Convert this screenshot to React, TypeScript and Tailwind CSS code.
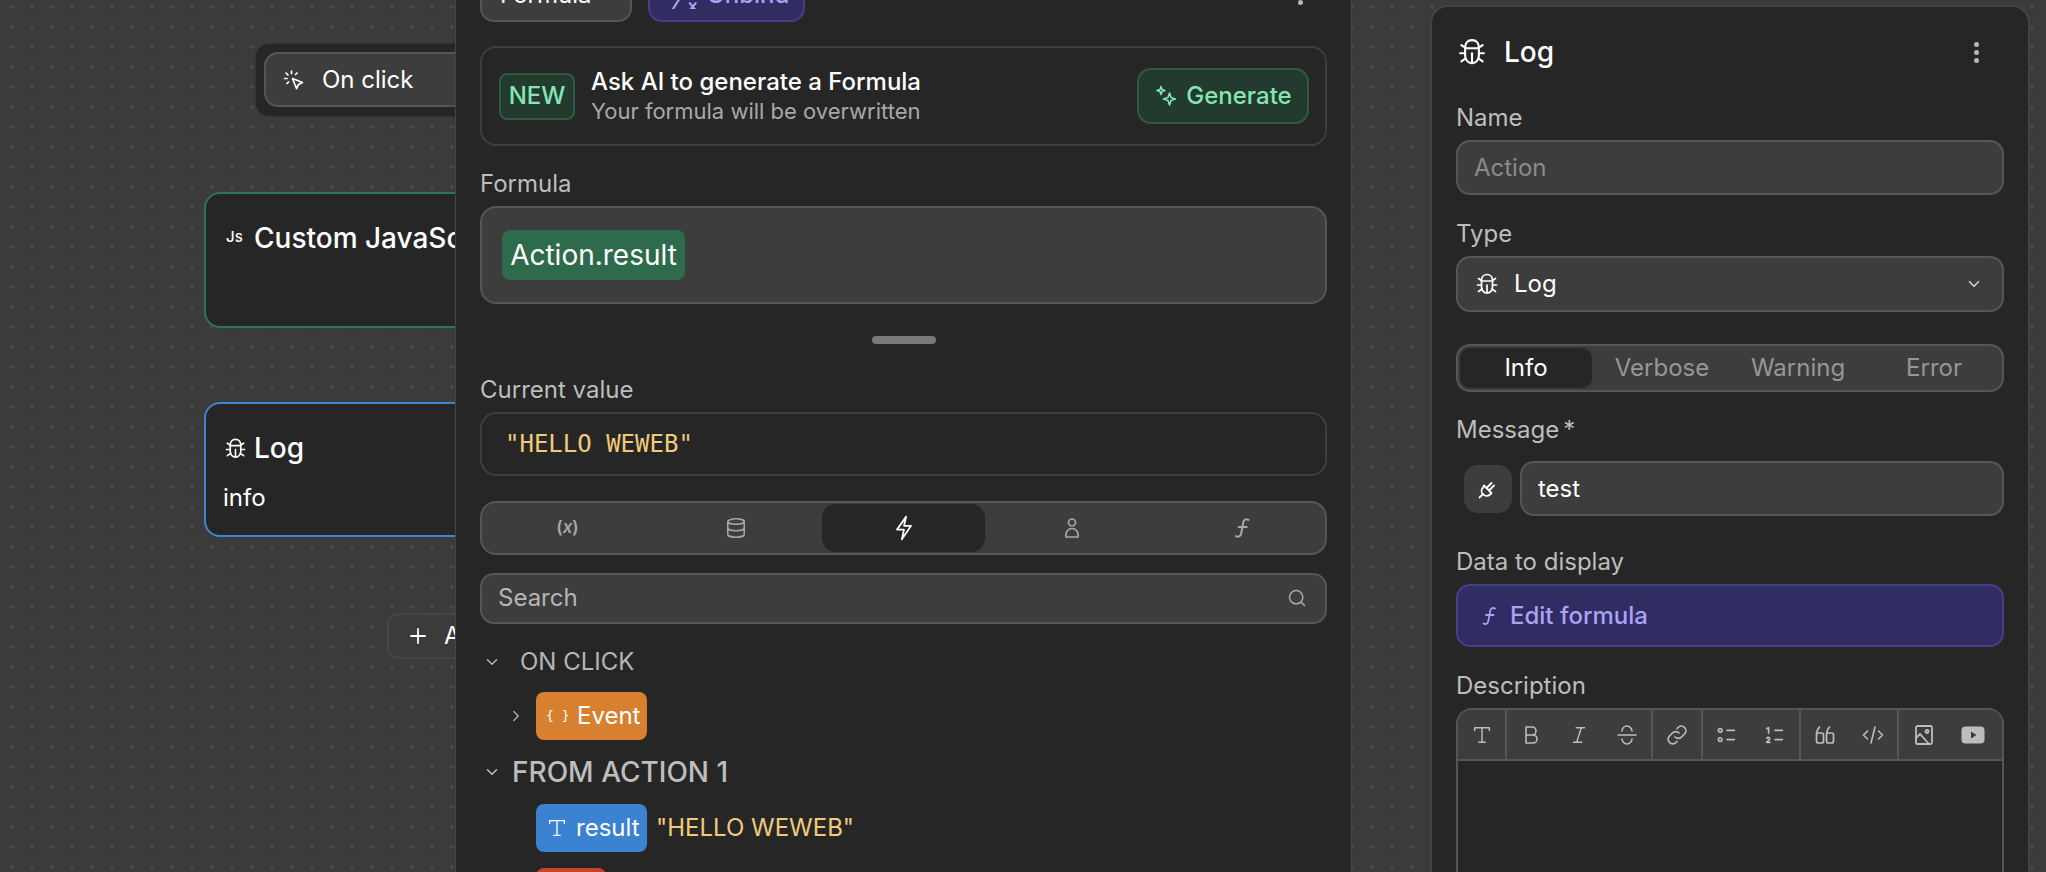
import { ChevronDown, ChevronRight, Database, Plus, Search } from "lucide-react";
import type { ReactNode } from "react";

const Icon = ({ className, children, sw = 1.8 }: { className: string; children: ReactNode; sw?: number }) => (
  <svg viewBox="0 0 24 24" fill="none" stroke="currentColor" strokeWidth={sw} strokeLinecap="round" strokeLinejoin="round" className={className}>
    {children}
  </svg>
);

const BugIcon = ({ className }: { className: string }) => (
  <Icon className={className} sw={1.7}>
    <path d="M12 2.500c-3.500 0-5.500 2.500-5.500 6v6.500c0 3.500 2.500 6 5.500 6s5.500-2.500 5.500-6V8.500c0-3.500-2-6-5.500-6z" />
    <path d="M6.500 9h11" />
    <path d="M12 13v8" />
    <path d="M6.500 13H2.500M6.500 8.500 3.500 6.500M7 17l-3.500 2.500" />
    <path d="M17.500 13h4M17.500 8.500l3-2M17 17l3.500 2.500" />
  </Icon>
);

const FormulaIcon = ({ className }: { className: string }) => (
  <Icon className={className}>
    <path d="M17 4.500c-2.200-1.200-4.300-.2-4.800 2.400l-1.900 10.200c-.5 2.600-2.600 3.600-4.800 2.400" />
    <path d="M8 11h7.500" />
  </Icon>
);

const SparkIcon = ({ className }: { className: string }) => (
  <Icon className={className} sw={1.6}>
    <path d="M7 2.500l1 3 3 1-3 1-1 3-1-3-3-1 3-1z" />
    <path d="M15.500 9l1.500 4.500 4.500 1.500-4.500 1.500-1.500 4.500-1.500-4.500-4.500-1.500 4.500-1.500z" />
  </Icon>
);

const Kebab = () => (
  <div className="flex flex-col gap-[3px]">
    <span className="h-[5px] w-[5px] rounded-full bg-[#b5b5b5]" />
    <span className="h-[5px] w-[5px] rounded-full bg-[#b5b5b5]" />
    <span className="h-[5px] w-[5px] rounded-full bg-[#b5b5b5]" />
  </div>
);

const Label = ({ children, className = "" }: { children: ReactNode; className?: string }) => (
  <div className={`h-[28px] text-[24px] leading-[28px] text-[#bdbdbd] ${className}`}>{children}</div>
);

const Chip = ({ className, children }: { className: string; children: ReactNode }) => (
  <div className={`flex h-[48px] items-center rounded-[8px] text-[24px] text-white ${className}`}>{children}</div>
);

const ToolButton = ({ children }: { children: ReactNode }) => (
  <div className="flex h-full flex-1 items-center justify-center text-[#bdbdbd]">{children}</div>
);

const Canvas = () => (
  <div className="relative w-[455px] shrink-0">
    <div className="absolute left-[255px] top-[43px] h-[74px] w-[300px] rounded-[14px] border border-[#333333] bg-[#262626] pl-[8px] pt-[8px]">
      <div className="flex h-[55px] items-center rounded-[14px] border-2 border-[#565656] bg-[#3d3d3d] pl-[16px] text-[24px] text-white">
        <Icon className="h-[24px] w-[24px]" sw={1.7}>
          <path d="M10.500 10.500 20.500 14.500 16.500 16.500 14.500 20.500z" />
          <path d="M9.500 3v2.500M4 5l2 2M15 5l-1.500 1.500M2.500 10.500H5M5 15.500l1.500-1.500" />
        </Icon>
        <span className="ml-[16px]">On click</span>
      </div>
    </div>
    <div className="absolute left-[204px] top-[192px] h-[136px] w-[400px] rounded-[16px] border-2 border-[#2f7552] bg-[#262626] pl-[20px] pt-[26px] text-white">
      <div className="flex h-[36px] items-center">
        <span className="mb-[2px] w-[28px] text-[15px] font-medium">Js</span>
        <span className="whitespace-nowrap text-[28px] font-medium">Custom JavaScript</span>
      </div>
    </div>
    <div className="absolute left-[204px] top-[402px] h-[135px] w-[400px] rounded-[16px] border-2 border-[#3c84d4] bg-[#262626] pl-[18px] pt-[26px] text-white">
      <div className="flex h-[36px] items-center">
        <BugIcon className="h-[23px] w-[23px]" />
        <span className="ml-[7px] text-[28px] font-medium">Log</span>
      </div>
      <div className="-ml-[1px] mt-[18px] text-[24px] leading-[28px]">info</div>
    </div>
    <div className="absolute left-[387px] top-[613px] flex h-[46px] w-[200px] items-center rounded-[12px] border-2 border-[#454545] bg-[#3b3b3b] pl-[17px] text-[24px] text-white">
      <Plus className="h-[24px] w-[24px]" strokeWidth={1.8} />
      <span className="ml-[14px] whitespace-nowrap">Add</span>
    </div>
  </div>
);

const FormulaPanel = () => (
  <div className="relative z-10 flex w-[897px] shrink-0 flex-col border-x border-[#454545] bg-[#262626] px-[24px] *:shrink-0">
    <div className="-mt-[33px] flex h-[55px] items-center gap-[16px]">
      <div className="flex h-full w-[152px] items-center rounded-[14px] border-2 border-[#565656] bg-[#3d3d3d] pl-[18px] text-[24px] text-white">Formula</div>
      <div className="flex h-full w-[157px] items-center gap-[9px] rounded-[14px] border-2 border-[#453f85] bg-[#312c62] pl-[20px] text-[24px] font-medium text-[#a8a3f5]">
        <Icon className="h-[28px] w-[28px]">
          <path d="M14 6 2.500 24" />
          <path d="M17 19l5 6M22 19l-5 6" />
        </Icon>
        Unbind
      </div>
      <div className="ml-auto mr-[24px]">
        <Kebab />
      </div>
    </div>

    <div className="mt-[24px] flex h-[100px] items-center rounded-[16px] border-2 border-[#3f3f3f] pl-[17px] pr-[16px]">
      <div className="flex h-[47px] w-[76px] items-center justify-center rounded-[8px] border-2 border-[#2f5a44] bg-[#233a2e] text-[24px] font-medium text-[#85e6b4]">NEW</div>
      <div className="ml-[16px]">
        <div className="text-[24px] font-medium leading-[30px] text-white">Ask AI to generate a Formula</div>
        <div className="text-[22px] leading-[29px] text-[#a8a8a8]">Your formula will be overwritten</div>
      </div>
      <div className="ml-auto flex h-[56px] w-[172px] items-center justify-center gap-[8px] rounded-[14px] border-2 border-[#2f5a44] bg-[#233a2e] text-[24px] font-medium text-[#85e6b4]">
        <SparkIcon className="h-[24px] w-[24px]" />
        Generate
      </div>
    </div>

    <Label className="mt-[23px] pt-[1px]">Formula</Label>
    <div className="mt-[9px] flex h-[98px] items-center rounded-[16px] border-2 border-[#565656] bg-[#3d3d3d] pl-[20px]">
      <div className="flex h-[50px] w-[183px] items-center justify-center rounded-[8px] bg-[#2e6b4d] text-[28px] text-white">Action.result</div>
    </div>

    <div className="mt-[32px] h-[8px] w-[64px] self-center rounded-full bg-[#7a7a7a]" />

    <Label className="mt-[31px] pt-[1px]">Current value</Label>
    <div className="mt-[9px] flex h-[64px] items-center rounded-[16px] border-2 border-[#3f3f3f] pl-[23px] font-['DejaVu_Sans_Mono',monospace] text-[24px] text-[#f1cb7a]">"HELLO WEWEB"</div>

    <div className="mt-[25px] flex h-[54px] items-center gap-[5px] rounded-[16px] border-2 border-[#565656] bg-[#3d3d3d] pl-[4px] pr-[1px] text-[#a8a8a8]">
      <div className="flex h-[48px] flex-1 items-center justify-center text-[17px] font-semibold">(<span className="italic">x</span>)</div>
      <div className="flex h-[48px] flex-1 items-center justify-center">
        <Database className="h-[22px] w-[22px]" strokeWidth={1.7} />
      </div>
      <div className="flex h-[48px] flex-1 items-center justify-center rounded-[14px] bg-[#262626] text-white">
        <Icon className="h-[26px] w-[26px]" sw={1.6}>
          <path d="M14 1.500 5.500 13.500h6.500L10 22.500l8.500-12.500H12z" />
        </Icon>
      </div>
      <div className="flex h-[48px] flex-1 items-center justify-center">
        <Icon className="h-[24px] w-[24px]" sw={1.7}>
          <circle cx="12" cy="6.500" r="3.500" />
          <path d="M6 21v-2.500a6 6 0 0 1 12 0V21z" />
        </Icon>
      </div>
      <div className="flex h-[48px] flex-1 items-center justify-center pl-[3px]">
        <FormulaIcon className="h-[26px] w-[26px]" />
      </div>
    </div>

    <div className="mt-[18px] flex h-[51px] items-center justify-between rounded-[14px] border-2 border-[#565656] bg-[#3d3d3d] pb-[2px] pl-[16px] pr-[18px] text-[24px] text-[#b5b5b5]">
      Search
      <Search className="h-[20px] w-[20px] text-[#a8a8a8]" strokeWidth={1.8} />
    </div>

    <div className="mt-[24px] flex h-[28px] items-center text-[24px] text-[#b5b5b5]">
      <ChevronDown className="ml-[3px] h-[18px] w-[18px]" />
      <span className="ml-[19px]">ON CLICK</span>
    </div>
    <div className="mt-[16px] flex items-center">
      <ChevronRight className="ml-[27px] h-[18px] w-[18px] text-[#a8a8a8]" />
      <Chip className="ml-[11px] w-[111px] bg-[#d68030] pl-[10px]">
        <span className="w-[31px] font-['DejaVu_Sans_Mono',monospace] text-[13px]">{"{ }"}</span>
        <span>Event</span>
      </Chip>
    </div>

    <div className="mt-[16px] flex h-[32px] items-center text-[28px] font-medium text-[#bdbdbd]">
      <ChevronDown className="ml-[3px] h-[18px] w-[18px]" />
      <span className="ml-[11px]">FROM ACTION 1</span>
    </div>
    <div className="ml-[56px] mt-[16px] flex items-center">
      <Chip className="w-[111px] bg-[#3b82d0] pl-[10px]">
        <Icon className="h-[22px] w-[22px]" sw={1.5}>
          <path d="M4 7V4h16v3M12 4v16M8.500 20h7" />
        </Icon>
        <span className="ml-[8px]">result</span>
      </Chip>
      <span className="ml-[9px] text-[24px] text-[#f1cb7a]">"HELLO WEWEB"</span>
    </div>
    <Chip className="ml-[56px] mt-[16px] w-[70px] bg-[#c8442a]">{null}</Chip>
  </div>
);

const LogPanel = () => (
  <div className="ml-[78px] mt-[5px] flex w-[600px] shrink-0 flex-col rounded-t-[18px] border-2 border-b-0 border-[#434343] bg-[#262626] px-[24px] pt-[27px]">
    <div className="flex h-[36px] items-center text-white">
      <BugIcon className="ml-[1px] h-[30px] w-[30px]" />
      <span className="ml-[17px] text-[28px] font-medium">Log</span>
      <div className="ml-auto mr-[25px]">
        <Kebab />
      </div>
    </div>

    <Label className="mt-[33px] pt-[1px]">Name</Label>
    <div className="mt-[9px] flex h-[55px] items-center rounded-[14px] border-2 border-[#565656] bg-[#3d3d3d] pl-[16px] text-[24px] text-[#8a8a8a]">Action</div>

    <Label className="mt-[24px] pt-[1px]">Type</Label>
    <div className="mt-[9px] flex h-[56px] items-center rounded-[14px] border-2 border-[#565656] bg-[#3d3d3d] pl-[17px] pr-[19px] text-[24px] text-white">
      <BugIcon className="h-[24px] w-[24px]" />
      <span className="ml-[15px]">Log</span>
      <ChevronDown className="ml-auto h-[18px] w-[18px] text-[#d0d0d0]" strokeWidth={2.2} />
    </div>

    <div className="mt-[32px] flex h-[48px] items-center rounded-[14px] border-2 border-[#565656] bg-[#3d3d3d] text-[24px] text-[#969696]">
      <div className="ml-[2px] flex h-[40px] w-[132px] items-center justify-center rounded-[10px] bg-[#262626] text-white">Info</div>
      <div className="flex flex-1 justify-center pl-[2px]">Verbose</div>
      <div className="flex flex-1 justify-center">Warning</div>
      <div className="flex flex-1 justify-center">Error</div>
    </div>

    <Label className="mt-[23px] pt-[1px]">
      Message<span className="ml-[4px]">*</span>
    </Label>
    <div className="mt-[18px] flex h-[55px] items-center">
      <div className="ml-[8px] flex h-[48px] w-[48px] items-center justify-center rounded-[14px] bg-[#3d3d3d] text-white">
        <Icon className="h-[24px] w-[24px]">
          <path d="M8 8.500 15.500 16l-1.500 1.500a4.950 4.950 0 0 1-7-7z" />
          <path d="M10.500 11 15.500 6M13 13.500l5-5M7 17l-3.500 3.500" />
        </Icon>
      </div>
      <div className="ml-[8px] flex h-full flex-1 items-center rounded-[14px] border-2 border-[#565656] bg-[#3d3d3d] pl-[16px] text-[24px] text-white">test</div>
    </div>

    <Label className="mt-[32px]">Data to display</Label>
    <div className="mt-[8px] flex h-[63px] items-center gap-[8px] rounded-[14px] border-2 border-[#453f85] bg-[#312c62] pl-[20px] text-[24px] font-medium text-[#a8a3f5]">
      <FormulaIcon className="h-[24px] w-[24px]" />
      Edit formula
    </div>

    <Label className="mt-[25px]">Description</Label>
    <div className="mt-[8px] flex-1 overflow-hidden rounded-t-[16px] border-2 border-b-0 border-[#565656]">
      <div className="flex h-[51px] border-b-2 border-[#565656] bg-[#3d3d3d]">
        <div className="flex w-[49px] border-r-2 border-[#565656]">
          <ToolButton>
            <Icon className="h-[22px] w-[22px]" sw={1.6}>
              <path d="M4 7V4h16v3M12 4v16M8.500 20h7" />
            </Icon>
          </ToolButton>
        </div>
        <div className="flex w-[146px] border-r-2 border-[#565656]">
          <ToolButton>
            <Icon className="h-[24px] w-[24px]" sw={1.6}>
              <path d="M7 4h6a4 4 0 0 1 0 8H7zM7 12h7a4 4 0 0 1 0 8H7z" />
            </Icon>
          </ToolButton>
          <ToolButton>
            <Icon className="h-[22px] w-[22px]" sw={1.6}>
              <path d="M9 4h9M6 20h9M14.500 4l-5 16" />
            </Icon>
          </ToolButton>
          <ToolButton>
            <Icon className="h-[24px] w-[24px]" sw={1.6}>
              <path d="M3 12h18M17 8c-.2-2.800-2.500-5-5-5S7.200 5 7 8M7 16c.2 2.800 2.500 5 5 5s4.800-2.200 5-5" />
            </Icon>
          </ToolButton>
        </div>
        <div className="flex w-[50px] border-r-2 border-[#565656]">
          <ToolButton>
            <Icon className="h-[24px] w-[24px]" sw={1.7}>
              <path d="M10 14a4.500 4.500 0 0 0 6.500 0l3-3a4.500 4.500 0 0 0-6.500-6.500L12 5.500" />
              <path d="M14 10a4.500 4.500 0 0 0-6.500 0l-3 3a4.500 4.500 0 0 0 6.500 6.500l1-1" />
            </Icon>
          </ToolButton>
        </div>
        <div className="flex w-[98px] border-r-2 border-[#565656]">
          <ToolButton>
            <Icon className="h-[22px] w-[22px]" sw={1.8}>
              <circle cx="4.500" cy="7" r="2" />
              <circle cx="4.500" cy="17" r="2" />
              <path d="M12 7h8M12 17h8" />
            </Icon>
          </ToolButton>
          <ToolButton>
            <Icon className="h-[22px] w-[22px]" sw={1.8}>
              <path d="M3 5l2-1v6" />
              <path d="M3 15.500c1-1.500 4-1 3 1l-3 3.500h3.500" />
              <path d="M12 7h8M12 17h8" />
            </Icon>
          </ToolButton>
        </div>
        <div className="flex w-[98px] border-r-2 border-[#565656]">
          <ToolButton>
            <Icon className="h-[24px] w-[24px]" sw={1.7}>
              <path d="M3.500 12a2 2 0 0 1 2-2h3a2 2 0 0 1 2 2v6a2 2 0 0 1-2 2h-3a2 2 0 0 1-2-2zc0-3 1-6 3-8" />
              <path d="M13.500 12a2 2 0 0 1 2-2h3a2 2 0 0 1 2 2v6a2 2 0 0 1-2 2h-3a2 2 0 0 1-2-2zc0-3 1-6 3-8" />
            </Icon>
          </ToolButton>
          <ToolButton>
            <Icon className="h-[24px] w-[24px]" sw={1.6}>
              <path d="M6.500 8 2.500 12l4 4M17.500 8l4 4-4 4M14 4l-4 16" />
            </Icon>
          </ToolButton>
        </div>
        <div className="flex flex-1 pr-[5px]">
          <ToolButton>
            <Icon className="h-[24px] w-[24px]" sw={1.8}>
              <rect x="4" y="3" width="16" height="18" rx="1.500" />
              <circle cx="15" cy="8.500" r="1.500" />
              <path d="M4 15l4-4 9 10" />
            </Icon>
          </ToolButton>
          <ToolButton>
            <svg viewBox="0 0 24 24" className="h-[24px] w-[24px]">
              <rect x="0.500" y="3.500" width="23" height="17" rx="4" fill="currentColor" />
              <path d="M10 8.500v7l5.500-3.500z" fill="#3d3d3d" />
            </svg>
          </ToolButton>
        </div>
      </div>
    </div>
  </div>
);

export default function App() {
  return (
    <div className="flex h-[872px] w-[2046px] overflow-hidden bg-[#3b3b3b] bg-[radial-gradient(circle,#4a4a4a_1.5px,transparent_2px)] bg-[size:20px_20px] bg-[position:2px_-3px] font-['Inter',sans-serif]">
      <Canvas />
      <FormulaPanel />
      <LogPanel />
    </div>
  );
}
